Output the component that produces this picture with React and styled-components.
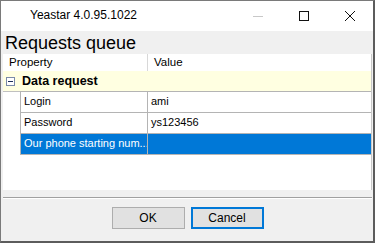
import styled, { createGlobalStyle } from 'styled-components'

const GlobalStyle = createGlobalStyle`
  html, body {
    margin: 0;
    padding: 0;
    background: #4b4b4b;
  }
  body {
    font-family: "Liberation Sans", Arial, sans-serif;
  }
`

const Window = styled.div`
  width: 375px;
  height: 243px;
  box-sizing: border-box;
  border-top: 1px solid #7a7a7a;
  border-left: 1px solid #7a7a7a;
  border-right: 2px solid #5c5c5c;
  border-bottom: 2px solid #5c5c5c;
  display: flex;
  flex-direction: column;
  background: #f0f0f0;
`

const TitleBar = styled.div`
  height: 30px;
  background: #fff;
  display: flex;
  align-items: center;
  padding-left: 29px;
  font-size: 12px;
  color: #000;
`

const Title = styled.div`
  flex: 1;
  padding-bottom: 2px;
`

const Caption = styled.div`
  width: 46px;
  height: 30px;
  display: flex;
  align-items: center;
  justify-content: center;
  color: ${p => (p.$dim ? '#c8c8c8' : '#111')};
`

const Client = styled.div`
  flex: 1;
  display: flex;
  flex-direction: column;
  padding: 0 1px 0 2px;
`

const Heading = styled.div`
  height: 23px;
  font-size: 18px;
  line-height: 25px;
  padding-left: 2px;
  color: #000;
`

const Grid = styled.div`
  height: 136px;
  background: #fff;
  border-right: 1px solid #c8c8c8;
  font-size: 11.5px;
  display: flex;
  flex-direction: column;
`

const HeaderRow = styled.div`
  height: 17px;
  display: grid;
  grid-template-columns: 145px 1fr;
  color: #000;
`

const HeaderCell = styled.div`
  padding-left: 6px;
  line-height: 16px;
  border-right: ${p => (p.$divider ? '1px solid #d8d8d8' : 'none')};
`

const Category = styled.div`
  height: 21px;
  background: #ffffe1;
  display: flex;
  align-items: center;
  gap: 7px;
  padding-left: 3px;
  font-weight: bold;
  font-size: 12.5px;
  border-bottom: 1px solid #c0c0c0;
  box-sizing: border-box;
`

const Rows = styled.div`
  margin-left: 17px;
  border-left: 1px solid #b4b4b4;
  margin-top: -1px;
`

const Row = styled.div`
  box-sizing: border-box;
  display: grid;
  grid-template-columns: 127px 1fr;
  border-top: 1px solid #b4b4b4;
  border-bottom: ${p => (p.$last ? '1px solid #b4b4b4' : 'none')};
  height: ${p => (p.$last ? '22px' : '21px')};
  background: ${p => (p.$selected ? '#0078d7' : '#fff')};
  color: ${p => (p.$selected ? '#fff' : '#000')};
`

const Cell = styled.div`
  padding-left: 3px;
  font-size: 11px;
  line-height: 19px;
  white-space: nowrap;
  overflow: hidden;
  border-right: ${p => (p.$divider ? '1px solid #b4b4b4' : 'none')};
`

const Footer = styled.div`
  flex: 1;
  display: flex;
  flex-direction: column;
  align-items: center;
  padding-top: 7px;
`

const Separator = styled.div`
  align-self: stretch;
  height: 1px;
  background: #a0a0a0;
  border-bottom: 1px solid #fff;
  margin-bottom: 8px;
`

const Buttons = styled.div`
  display: flex;
  gap: 6px;
`

const Button = styled.div`
  width: 73px;
  height: 22px;
  box-sizing: border-box;
  background: #e1e1e1;
  border: ${p => (p.$default ? '2px solid #0078d7' : '1px solid #adadad')};
  font-size: 12px;
  display: flex;
  align-items: center;
  justify-content: center;
  color: #000;
`

const CollapseIcon = () => (
  <svg width="9" height="9" viewBox="0 0 9 9">
    <rect x="0.5" y="0.5" width="8" height="8" fill="#fff" stroke="#7a8aa8" />
    <path d="M2 4.5h5" stroke="#1c2e5a" strokeWidth="1" />
  </svg>
)

const rows = [
  { name: 'Login', value: 'ami' },
  { name: 'Password', value: 'ys123456' },
  { name: 'Our phone starting num...', value: '', selected: true },
]

export default function App() {
  return (
    <>
      <GlobalStyle />
      <Window>
        <TitleBar>
          <Title>Yeastar 4.0.95.1022</Title>
          <Caption $dim>
            <svg width="10" height="10" viewBox="0 0 10 10">
              <path d="M0 5.5h10" stroke="currentColor" />
            </svg>
          </Caption>
          <Caption>
            <svg width="10" height="10" viewBox="0 0 10 10">
              <rect x="0.5" y="0.5" width="9" height="9" fill="none" stroke="currentColor" />
            </svg>
          </Caption>
          <Caption>
            <svg width="10" height="10" viewBox="0 0 10 10">
              <path d="M0 0L10 10M10 0L0 10" stroke="currentColor" />
            </svg>
          </Caption>
        </TitleBar>
        <Client>
          <Heading>Requests queue</Heading>
          <Grid>
            <HeaderRow>
              <HeaderCell $divider>Property</HeaderCell>
              <HeaderCell>Value</HeaderCell>
            </HeaderRow>
            <Category>
              <CollapseIcon />
              Data request
            </Category>
            <Rows>
              {rows.map((r, i) => (
                <Row key={r.name} $selected={r.selected} $last={i === rows.length - 1}>
                  <Cell $divider>{r.name}</Cell>
                  <Cell>{r.value}</Cell>
                </Row>
              ))}
            </Rows>
          </Grid>
          <Footer>
            <Separator />
            <Buttons>
              <Button>OK</Button>
              <Button $default>Cancel</Button>
            </Buttons>
          </Footer>
        </Client>
      </Window>
    </>
  )
}
